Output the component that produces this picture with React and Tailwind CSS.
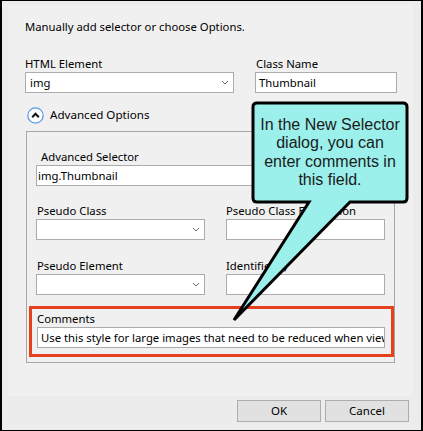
import React from "react";

const font = { fontFamily: '"Noto Sans", "Open Sans", sans-serif' };

function Chevron() {
  return (
    <svg width="8" height="5" viewBox="0 0 8 5" className="shrink-0">
      <path d="M1 1 L4 4 L7 1" fill="none" stroke="#6b6b6b" strokeWidth="1" />
    </svg>
  );
}

function Select({ value, className = "" }) {
  return (
    <div className={`h-[21px] bg-white border border-[#acacac] flex items-center justify-between pl-[4px] pr-[4px] ${className}`}>
      <span className="text-[11.3px] leading-[16px] text-black">{value}</span>
      <Chevron />
    </div>
  );
}

function Input({ value, className = "", pl = "pl-[2px]" }) {
  return (
    <div className={`h-[21px] bg-white border border-[#acacac] flex items-center overflow-hidden whitespace-nowrap ${pl} ${className}`}>
      <span className="text-[11.3px] leading-[16px] text-black">{value}</span>
    </div>
  );
}

function Label({ children, className = "" }) {
  return <div className={`h-[16px] text-[11.3px] leading-[16px] text-black whitespace-nowrap ${className}`}>{children}</div>;
}

export default function App() {
  return (
    <div style={font} className="relative w-[423px] h-[431px] bg-[#ececec] border-l-2 border-r-2 border-t border-b border-black flex flex-col overflow-hidden">
      <div className="ml-[6px] mt-[4px] w-[405px] h-[391px] bg-[#f0f0f0] pl-[17px] pt-[14px] flex flex-col">
        <div className="h-[16px] text-[11.3px] leading-[16px] text-black">Manually add selector or choose Options.</div>

        <div className="mt-[21px] flex gap-[21px]">
          <div className="w-[209px] flex flex-col">
            <Label>HTML Element</Label>
            <Select value="img" />
          </div>
          <div className="w-[142px] flex flex-col">
            <Label className="pl-[1px]">Class Name</Label>
            <Input value="Thumbnail" pl="pl-[3px]" />
          </div>
        </div>

        <div className="mt-[14px] h-[16px] flex items-center gap-[6px] pl-[2px]">
          <svg width="17" height="17" viewBox="0 0 17 17" className="shrink-0">
            <circle cx="8.5" cy="8.5" r="7.7" fill="#fbfdff" stroke="#5d97e0" strokeWidth="1.2" />
            <path d="M5.2 10.2 L8.5 6.8 L11.8 10.2" fill="none" stroke="#111" strokeWidth="2" />
          </svg>
          <span className="text-[11.6px] leading-[16px] text-black">Advanced Options</span>
        </div>

        <div className="mt-[8px] ml-[1px] w-[369px] h-[232px] border border-[#a6a6a6] flex flex-col">
          <div className="mt-[17px] pl-[9px] flex flex-col">
            <Label className="pl-[5px]">Advanced Selector</Label>
            <Input value="img.Thumbnail" className="w-[349px]" pl="pl-[1px]" />
          </div>

          <div className="mt-[17px] pl-[9px] flex gap-[21px]">
            <div className="w-[169px] flex flex-col">
              <Label className="pl-[1px]">Pseudo Class</Label>
              <Select value="" />
            </div>
            <div className="w-[159px] flex flex-col">
              <Label className="text-[#8a8a8a]">Pseudo Class Expression</Label>
              <Input value="" />
            </div>
          </div>

          <div className="mt-[18px] pl-[9px] flex gap-[21px]">
            <div className="w-[169px] flex flex-col">
              <Label className="pl-[1px]">Pseudo Element</Label>
              <Select value="" />
            </div>
            <div className="w-[159px] flex flex-col">
              <Label>Identifier(s)</Label>
              <Input value="" />
            </div>
          </div>

          <div className="mt-[11px] ml-[2px] w-[365px] border-[3px] border-[#e5411d] pl-[5px] pt-[2px] pb-[6px] flex flex-col">
            <Label>Comments</Label>
            <Input value="Use this style for large images that need to be reduced when viewed" className="w-[348px]" pl="pl-[3px]" />
          </div>
        </div>
      </div>

      <div className="mt-[4px] pr-[12px] flex justify-end gap-[4px]">
        <div className="w-[84px] h-[22px] bg-[#e1e1e1] border border-[#adadad] flex items-center justify-center text-[11.5px] text-black">OK</div>
        <div className="w-[84px] h-[22px] bg-[#e1e1e1] border border-[#adadad] flex items-center justify-center text-[11.5px] text-black">Cancel</div>
      </div>

      <svg className="absolute left-[-2px] top-[-1px]" width="423" height="431" viewBox="0 0 423 431" style={{ pointerEvents: "none" }}>
        <path
          d="M257 103 H403 Q407 103 407 107 V198 Q407 202 403 202 H350 L234 320 L309 202 H257 Q253 202 253 198 V107 Q253 103 257 103 Z"
          fill="#9cf0ec"
          stroke="#000"
          strokeWidth="3"
          strokeLinejoin="miter"
        />
      </svg>
      <div
        className="absolute left-[251px] top-[102px] w-[154px] pt-[13px] text-center text-[16px] leading-[18.3px] text-[#1a1a1a]"
        style={{ fontFamily: '"Liberation Sans", Arial, sans-serif' }}
      >
        In the New Selector<br />dialog, you can<br />enter comments in<br />this field.
      </div>
    </div>
  );
}
